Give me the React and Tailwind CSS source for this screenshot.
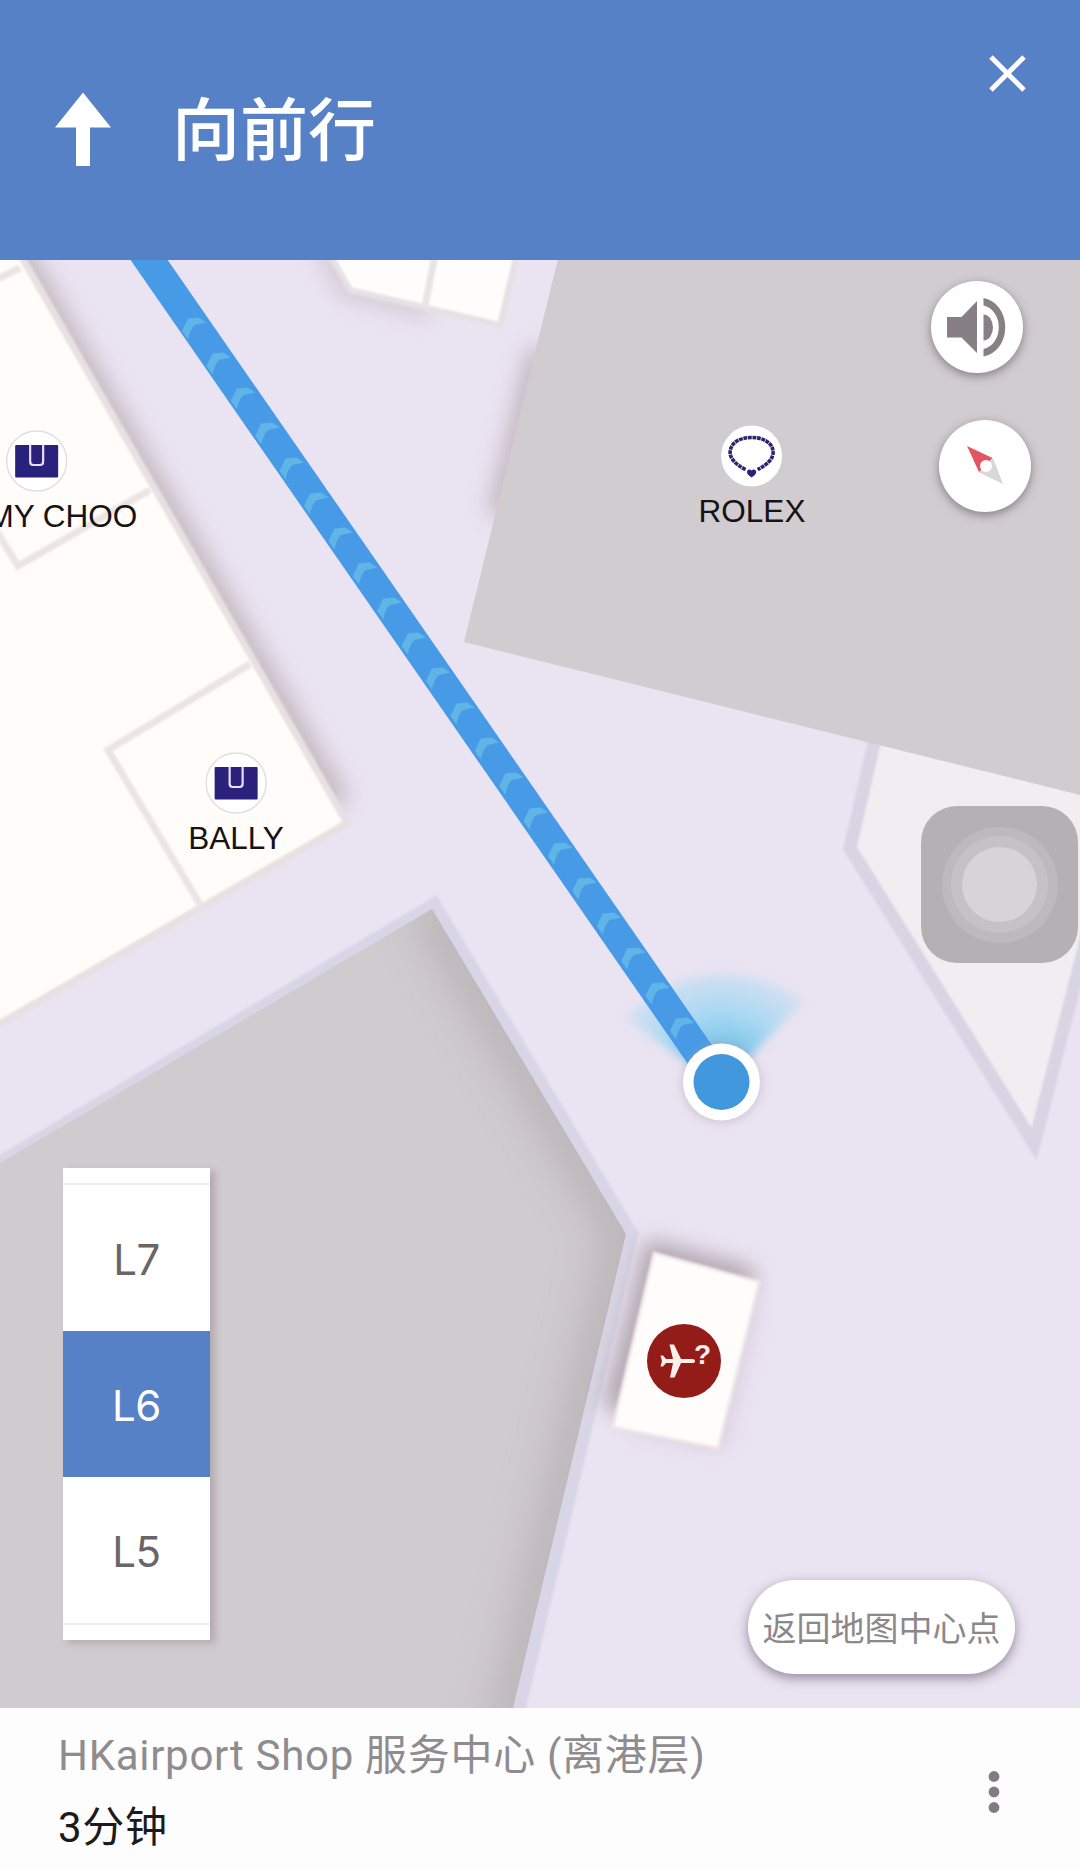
import { useState } from "react";

const CJK = "font-['Inter','Noto_Sans_CJK_SC',sans-serif]";

const FLOORS = ["L7", "L6", "L5"];

// one chevron every 24.4 / 35 px along the route
const CHEVRONS = Array.from({ length: 21 }, (_, i) => ({ x: i * 24.4, y: i * 35 }));

function BagIcon() {
  return (
    <svg viewBox="0 0 62 62" className="size-[62px]">
      <circle cx="31" cy="31" r="30" fill="#fff" stroke="#e3dfe1" strokeWidth="1.5" />
      <rect x="9.500" y="15" width="43" height="32.500" rx="1" fill="#29217c" />
      <path d="M24.500 14.500v17q0 3.500 3 3.500h7q3 0 3-3.500v-17" fill="none" stroke="#e4e1f6" strokeWidth="2.200" />
    </svg>
  );
}

function NecklaceIcon() {
  return (
    <svg viewBox="0 0 62 62" className="size-[62px]">
      <circle cx="31" cy="31" r="30.500" fill="#fff" />
      <path
        d="M25 44.500C14 39 9.500 33 9.500 27.500C9.500 18 19 12.500 31 12.500S52.500 18 52.500 27.500C52.500 33 48 39 37 44.500"
        fill="none"
        stroke="#2b2470"
        strokeWidth="3.6"
        strokeDasharray="3.8 0.7"
      />
      <path d="M26.500 46q2-2.500 4.500-.5q2.500-2 4.500.5q1 3-4.500 6.500q-5.500-3.500-4.500-6.500z" fill="#29217c" />
    </svg>
  );
}

function SpeakerIcon() {
  return (
    <svg viewBox="0 0 92 92" className="size-full" fill="#868084">
      <path d="M16 36h14.500L46 20v52L30.500 56.500H16z" />
      <path d="M52.500 33.500a9.500 13 0 0 1 0 26z" />
      <path d="M52.500 17a25 29.500 0 0 1 0 58.500v-7.500a18 22 0 0 0 0-43.500z" />
    </svg>
  );
}

function CompassIcon() {
  return (
    <svg viewBox="0 0 92 92" className="size-full">
      <path d="M54 38L64 64L39 52z" fill="#d9d7d8" />
      <path d="M28 26L53.500 38L40 52z" fill="#e15660" />
      <circle cx="47" cy="46" r="6" fill="#fff" />
    </svg>
  );
}

function FloorPlan() {
  return (
    <svg viewBox="0 260 1080 1448" className="block h-full w-full">
      <defs>
        <filter id="soft" filterUnits="userSpaceOnUse" x="-60" y="200" width="1200" height="1600">
          <feGaussianBlur stdDeviation="11" />
        </filter>
        <filter id="wide" filterUnits="userSpaceOnUse" x="-60" y="200" width="1200" height="1600">
          <feGaussianBlur stdDeviation="20" />
        </filter>
        <filter id="edge" filterUnits="userSpaceOnUse" x="-60" y="200" width="1200" height="1600">
          <feGaussianBlur stdDeviation="1.2" />
        </filter>
        <filter id="haze" filterUnits="userSpaceOnUse" x="-60" y="200" width="1200" height="1600">
          <feGaussianBlur stdDeviation="5" />
        </filter>
        <radialGradient id="beam" gradientUnits="userSpaceOnUse" cx="721" cy="1082" r="115">
          <stop offset="0.3" stopColor="#74c1e6" stopOpacity="0.95" />
          <stop offset="0.6" stopColor="#9cd6f3" stopOpacity="0.85" />
          <stop offset="1" stopColor="#b9dcf3" stopOpacity="0.45" />
        </radialGradient>
        <clipPath id="hall">
          <path d="M0 1163L432 909L626 1234L513 1708H0z" />
        </clipPath>
      </defs>

      <rect y="260" width="1080" height="1448" fill="#eae3f1" />

      {/* shops on the left */}
      <path d="M10 240L338 805" stroke="#b3a8ad" strokeWidth="26" opacity="0.75" filter="url(#soft)" />
      <path d="M-20 240H12L347 823L-20 1035z" fill="#fffcfa" stroke="#e7e1e1" strokeWidth="7" filter="url(#edge)" />
      <g fill="none" stroke="#eae5e4" strokeWidth="7" filter="url(#edge)">
        <path d="M250 664L108 750L201 906" />
        <path d="M150 490L18 566L-8 524" />
        <path d="M-5 280L20 268" />
      </g>

      {/* shops at the top */}
      <path d="M322 240L346 289L430 310" fill="none" stroke="#bdb0ba" strokeWidth="16" opacity="0.6" filter="url(#soft)" />
      <path d="M322 240L350 290L500 325L520 240z" fill="#fffdfc" stroke="#e6e1e4" strokeWidth="6" filter="url(#edge)" />
      <path d="M435 255L425 306" stroke="#e9e4e4" strokeWidth="7" filter="url(#edge)" />

      {/* kiosk on the right */}
      <path d="M876 735L850 848L1034 1144L1090 925V735z" fill="#f1edf0" stroke="#d9d4e4" strokeWidth="13" filter="url(#edge)" />

      {/* ROLEX block */}
      <path d="M541 350L500 515" stroke="#b0a4ab" strokeWidth="24" opacity="0.75" filter="url(#soft)" />
      <path d="M558 259L464 642L1080 795V259z" fill="#d1cccf" />

      {/* hall at the bottom */}
      <path
        d="M-10 1169L434 905L631 1234L516 1720H-10z"
        fill="#d0cbce"
        stroke="#d8d5e6"
        strokeWidth="14"
        filter="url(#edge)"
      />
      <g clipPath="url(#hall)">
        <path d="M-10 1150L432 905L628 1233L515 1715H-10z" fill="#d0cbce" />
        <path d="M430 900L630 1233L510 1740" fill="none" stroke="#aea8ac" strokeWidth="52" opacity="0.6" filter="url(#wide)" />
      </g>

      {/* information counter */}
      <path d="M616 1410L656 1256L752 1282" fill="none" stroke="#a1949c" strokeWidth="26" opacity="0.85" filter="url(#soft)" />
      <path d="M748 1300L716 1438L630 1420" fill="none" stroke="#b5a9b4" strokeWidth="14" opacity="0.5" filter="url(#soft)" />
      <path d="M654 1253L759 1282L718 1448L613 1427z" fill="#fffdfc" stroke="#f0e9ea" strokeWidth="3" filter="url(#edge)" />

      {/* route */}
      <path d="M721 1086L626 1018Q645 1000 665 988Q735 955 804 1001z" fill="url(#beam)" filter="url(#haze)" />
      <path d="M141.500 249L719 1082" stroke="#479ae6" strokeWidth="30.500" />
      <g fill="#5fb5e5">
        {CHEVRONS.map((c) => (
          <path
            key={c.y}
            d="M188 318.500L199 317.500L206.500 322.500L195 325Q190.500 328 188 339.500L182 331z"
            transform={`translate(${c.x} ${c.y})`}
          />
        ))}
      </g>
      <circle cx="721.500" cy="1083" r="40" fill="#a79cab" opacity="0.4" filter="url(#haze)" />
      <circle cx="721.500" cy="1082" r="38.500" fill="#fff" />
      <circle cx="721.500" cy="1082" r="28" fill="#4198dd" />
    </svg>
  );
}

function ShopPin({ className, icon, name }) {
  return (
    <div className={`absolute flex -translate-x-1/2 flex-col items-center ${className}`}>
      {icon}
      <span className="mt-1.5 font-['Liberation_Sans',sans-serif] text-[31.5px] leading-9 whitespace-nowrap text-[#161314]">
        {name}
      </span>
    </div>
  );
}

export default function App() {
  const [floor, setFloor] = useState("L6");

  return (
    <div className={`flex h-[1869px] w-[1080px] flex-col overflow-hidden bg-white ${CJK}`}>
      <header className="flex h-[260px] shrink-0 items-start bg-[#5681c6] text-white">
        <svg viewBox="0 0 58 74" className="mt-[92px] ml-[54px] h-[74px] w-[58px]" fill="currentColor">
          <path d="M29 0.500L57 35.500H36V74H22V35.500H1z" />
        </svg>
        <h1 className="mt-[86px] ml-[60px] text-[68px] leading-[88px] font-medium">向前行</h1>
        <button className="mt-[55px] mr-[54px] ml-auto" aria-label="close">
          <svg viewBox="0 0 37 37" className="size-[37px]" stroke="currentColor" strokeWidth="5">
            <path d="M2 2L35 35M35 2L2 35" />
          </svg>
        </button>
      </header>

      <main className="relative h-[1448px] shrink-0 overflow-hidden">
        <FloorPlan />

        <ShopPin className="top-[170px] left-[37px]" icon={<BagIcon />} name="JIMMY CHOO" />
        <ShopPin className="top-[492px] left-[236px]" icon={<BagIcon />} name="BALLY" />
        <ShopPin className="top-[165px] left-[752px]" icon={<NecklaceIcon />} name="ROLEX" />

        {/* flight enquiries */}
        <div className="absolute top-[1064px] left-[647px] size-[74px] rounded-full bg-[#941c18] text-[#fff1ea]">
          <svg viewBox="0 0 74 74" className="size-full" fill="currentColor">
            <path d="M48 37q0 2-3 2H34L27.500 53.500h-4.500L26 39H19L16 42.500H13.500L15 37L13.500 31.500H16L19 35H26L22.500 20.500H27L34 35H45q3 0 3 2z" />
          </svg>
          <span className="absolute top-[16px] left-[47px] font-['Liberation_Sans',sans-serif] text-[28px] leading-[30px] font-bold">?</span>
        </div>

        {/* map controls */}
        <button className="absolute top-[21px] left-[931px] size-[92px] rounded-full bg-white shadow-[0_3px_10px_rgba(60,50,55,0.5)]">
          <SpeakerIcon />
        </button>
        <button className="absolute top-[160px] left-[939px] size-[92px] rounded-full bg-white shadow-[0_3px_10px_rgba(60,50,55,0.5)]">
          <CompassIcon />
        </button>

        {/* assistive touch */}
        <div className="absolute top-[546px] left-[921px] flex size-[157px] items-center justify-center rounded-[36px] bg-[#b5b0b4]">
          <div className="flex size-[116px] items-center justify-center rounded-full bg-[#bdb9bc]">
            <div className="flex size-[97px] items-center justify-center rounded-full bg-[#c5c1c5]">
              <div className="size-[75px] rounded-full bg-[#d7d3d7]" />
            </div>
          </div>
        </div>

        {/* floor picker */}
        <div className="absolute top-[908px] left-[63px] flex h-[472px] w-[147px] flex-col bg-white py-[15px] shadow-[5px_3px_7px_rgba(90,75,80,0.25)]">
          <div className="flex flex-1 flex-col border-y-2 border-[#f0ecee]">
            {FLOORS.map((f) => (
              <button
                key={f}
                onClick={() => setFloor(f)}
                className={`flex-1 pt-0.5 text-[42px] font-normal tracking-[-0.5px] ${f === floor ? "bg-[#5681c6] text-white" : "text-[#6a6668]"}`}
              >
                {f}
              </button>
            ))}
          </div>
        </div>

        <button className="absolute top-[1320px] left-[748px] flex h-[94px] w-[267px] items-center justify-center rounded-full bg-white pt-[3px] text-[34px] whitespace-nowrap text-[#8c888a] shadow-[0_4px_12px_rgba(60,50,65,0.5)]">
          返回地图中心点
        </button>
      </main>

      <footer className="flex flex-1 items-start justify-between bg-[#fefdfe] pr-[80px] pl-[58px]">
        <div className="pt-[18px] font-['Roboto','Noto_Sans_CJK_SC',sans-serif] text-[42px] leading-[60px] whitespace-nowrap">
          <p className="tracking-[0.7px] text-[#8f8c8f]">HKairport Shop 服务中心 (离港层)</p>
          <p className="mt-3 tracking-[0.7px] text-[#1c1a1b]">3分钟</p>
        </div>
        <svg viewBox="0 0 12 44" className="mt-[62px] h-[44px] w-[12px]" fill="#807d80">
          <circle cx="6" cy="6.500" r="5.400" />
          <circle cx="6" cy="22" r="5.400" />
          <circle cx="6" cy="37.500" r="5.400" />
        </svg>
      </footer>
    </div>
  );
}
